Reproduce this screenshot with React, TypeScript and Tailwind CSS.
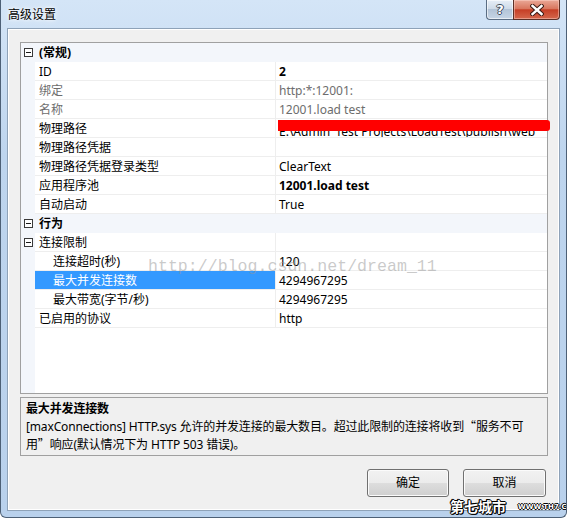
import React from 'react';

type Row = {
  kind: 'cat' | 'prop';
  name: string;
  value?: string;
  bold?: boolean;
  gray?: boolean;
  indent?: boolean;
  expander?: boolean;
  selected?: boolean;
  redacted?: boolean;
};

const rows: Row[] = [
  { kind: 'cat', name: '(常规)' },
  { kind: 'prop', name: 'ID', value: '2', bold: true },
  { kind: 'prop', name: '绑定', value: 'http:*:12001:', gray: true },
  { kind: 'prop', name: '名称', value: '12001.load test', gray: true },
  { kind: 'prop', name: '物理路径', value: 'E:\\Admin_Test Projects\\LoadTest\\publish\\web', redacted: true },
  { kind: 'prop', name: '物理路径凭据', value: '' },
  { kind: 'prop', name: '物理路径凭据登录类型', value: 'ClearText' },
  { kind: 'prop', name: '应用程序池', value: '12001.load test', bold: true },
  { kind: 'prop', name: '自动启动', value: 'True' },
  { kind: 'cat', name: '行为' },
  { kind: 'prop', name: '连接限制', value: '', expander: true },
  { kind: 'prop', name: '连接超时(秒)', value: '120', indent: true },
  { kind: 'prop', name: '最大并发连接数', value: '4294967295', indent: true, selected: true },
  { kind: 'prop', name: '最大带宽(字节/秒)', value: '4294967295', indent: true },
  { kind: 'prop', name: '已启用的协议', value: 'http' },
];

function MinusBox() {
  return (
    <span className="flex h-[9px] w-[9px] items-center justify-center border border-[#3a3a3a] bg-white">
      <span className="h-px w-[5px] bg-[#1a1a1a]" />
    </span>
  );
}

function GridRow({ row }: { row: Row }) {
  if (row.kind === 'cat') {
    return (
      <div className="flex h-[19px] items-center bg-[#f3f6fb]">
        <div className="flex w-[14px] items-center justify-center">
          <MinusBox />
        </div>
        <div className="pt-px pl-[4px] font-bold leading-[18px] text-black">{row.name}</div>
      </div>
    );
  }

  const tone = row.gray ? 'text-[#6d6d6d]' : 'text-black';

  return (
    <div className="flex h-[19px]">
      <div className="flex w-[14px] items-center justify-center bg-[#f3f6fb]">
        {row.expander && <MinusBox />}
      </div>
      <div
        className={`w-[241px] border-r border-b border-[#eeeeee] pt-px leading-[17px] whitespace-nowrap ${
          row.indent ? 'pl-[18px]' : 'pl-[4px]'
        } ${row.selected ? 'bg-[#3399ff] text-white' : tone}`}
      >
        {row.name}
      </div>
      <div
        className={`relative flex-1 border-b border-[#eeeeee] pt-px pl-[3px] leading-[17px] whitespace-nowrap ${tone} ${
          row.bold ? 'font-bold' : ''
        }`}
      >
        {row.redacted ? (
          <>
            <span className="block h-[17px] overflow-hidden pt-[3px] text-black">{row.value}</span>
            <span className="absolute top-[1px] left-[2px] -right-[3px] h-[11px] rounded-r-[3px] bg-[#ff0000]" />
          </>
        ) : (
          row.value
        )}
      </div>
    </div>
  );
}

function WinButton({ label, w }: { label: string; w: string }) {
  return (
    <button
      className={`${w} h-[28px] rounded-[3px] border border-[#707070] bg-[linear-gradient(to_bottom,#f2f2f2_0%,#ebebeb_50%,#dddddd_51%,#cfcfcf_100%)] text-[12px] text-black shadow-[inset_0_0_0_1px_#fbfbfb]`}
    >
      {label}
    </button>
  );
}

export default function App() {
  return (
    <div className="relative flex h-[518px] w-[567px] flex-col overflow-hidden rounded-b-[6px] border-x border-b border-[#4d6076] bg-[linear-gradient(to_bottom,#d4e5f7_0%,#bed5ee_30%,#b9d1ec_100%)] font-['Noto_Sans','Noto_Sans_CJK_SC',sans-serif] text-[12px]">
      {/* 标题栏 */}
      <div className="flex h-[28px] items-start">
        <div className="pt-[6px] pl-[7px] leading-[17px] text-black [text-shadow:0_0_6px_#ffffff,0_0_3px_#ffffff]">
          高级设置
        </div>
        <div className="ml-auto mr-[6px] flex h-[20px]">
          <div className="flex w-[27px] items-center justify-center rounded-bl-[4px] border border-t-0 border-r-0 border-[#5a6d83] bg-[linear-gradient(to_bottom,#e6eef7_0%,#cfdbe8_45%,#b3c4d7_50%,#c6d5e5_100%)] shadow-[inset_0_0_0_1px_rgba(255,255,255,0.6)]">
            <span className="font-['DejaVu_Sans',sans-serif] text-[13px] font-bold leading-none text-white [text-shadow:-1px_0_#3d4b5c,1px_0_#3d4b5c,0_-1px_#3d4b5c,0_1px_#3d4b5c]">
              ?
            </span>
          </div>
          <div className="flex w-[47px] items-center justify-center rounded-br-[4px] border border-t-0 border-[#5b3027] bg-[linear-gradient(to_bottom,#eaa897_0%,#d9775f_45%,#c63f26_52%,#d5674c_100%)] shadow-[inset_0_0_0_1px_rgba(255,220,210,0.45)]">
            <svg width="14" height="12" viewBox="0 0 14 12">
              <path d="M2.5 2 L11.5 10 M11.5 2 L2.5 10" stroke="#3b1a14" strokeWidth="4.4" strokeLinecap="square" />
              <path d="M2.5 2 L11.5 10 M11.5 2 L2.5 10" stroke="#ffffff" strokeWidth="2.4" strokeLinecap="square" />
            </svg>
          </div>
        </div>
      </div>

      {/* 客户区 */}
      <div className="mx-[6px] flex h-[483px] flex-col border border-[#8ea2b8] bg-[#f0f0f0] pt-[13px] pl-[12px] pr-[11px] shadow-[inset_0_0_0_1px_#ffffff]">
        {/* 属性网格 */}
        <div className="flex h-[352px] flex-col border border-[#a0a0a0] bg-white">
          {rows.map((r, i) => (
            <GridRow key={i} row={r} />
          ))}
          <div className="flex flex-1">
            <div className="w-[14px] bg-[#f3f6fb]" />
            <div className="flex-1 bg-white" />
          </div>
        </div>

        {/* 说明 */}
        <div className="mt-[3px] h-[59px] border border-[#a0a0a0] bg-[#f0f0f0] pt-[2px] pl-[5px] leading-[17px] tracking-[-0.15px] text-black">
          <div className="font-bold">最大并发连接数</div>
          <div className="whitespace-nowrap">
            [maxConnections] HTTP.sys 允许的并发连接的最大数目。超过此限制的连接将收到
            <span className="font-['Noto_Sans_CJK_SC',sans-serif]">“</span>服务不可
          </div>
          <div className="whitespace-nowrap">
            用<span className="font-['Noto_Sans_CJK_SC',sans-serif]">”</span>响应(默认情况下为 HTTP 503 错误)。
          </div>
        </div>

        {/* 按钮 */}
        <div className="mt-[13px] flex justify-end gap-[14px] pr-[2px]">
          <WinButton label="确定" w="w-[82px]" />
          <WinButton label="取消" w="w-[83px]" />
        </div>
      </div>

      {/* 水印 */}
      <div className="pointer-events-none absolute top-[257px] left-[147px] whitespace-nowrap font-['Liberation_Mono',monospace] text-[16.6px] leading-[20px] text-[rgba(150,150,150,0.5)]">
        http://blog.csdn.net/dream_11
      </div>
      <div className="pointer-events-none absolute top-[497px] left-[449px] flex w-max items-end gap-[12px] whitespace-nowrap">
        <span className="font-['Noto_Sans_CJK_SC',sans-serif] text-[14px] font-bold leading-[18px] text-white [text-shadow:-1px_0_#000,1px_0_#000,0_-1px_#000,0_1px_#000,1px_1px_#000,-1px_-1px_#000]">
          第七城市
        </span>
        <span className="pb-[3px] font-['DejaVu_Sans',sans-serif] text-[7px] font-bold leading-[9px] text-white [text-shadow:-1px_0_#000,1px_0_#000,0_-1px_#000,0_1px_#000]">
          WWW.TH7.CN
        </span>
      </div>
    </div>
  );
}
